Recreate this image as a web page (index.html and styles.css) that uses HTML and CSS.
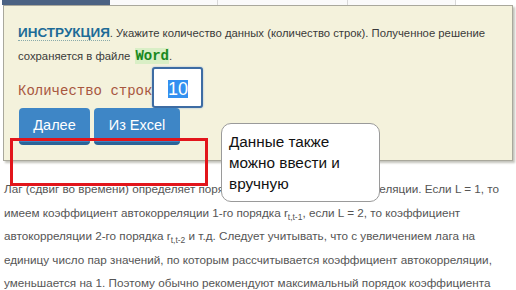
FILE: index.html
```html
<!DOCTYPE html>
<html lang="ru">
<head>
    <meta charset="UTF-8">
    <title>Автокорреляция</title>
    <link rel="stylesheet" href="styles.css">
</head>
<body>

    <div class="tabs">
        <a class="tab active" href="#"></a>
        <a class="tab" href="#"></a>
        <a class="tab tab-wide" href="#"></a>
        <a class="tab" href="#"></a>
    </div>

    <!-- блок ввода данных -->
    <div class="task">
        <p class="help"><span class="hint">ИНСТРУКЦИЯ</span>. Укажите количество данных (количество строк). Полученное решение сохраняется в файле <span class="word">Word</span>.</p>
        <div class="rows">
            <label class="rows-label">Количество строк</label>
            <div class="num-box"><span class="num">10</span></div>
        </div>
        <div class="buttons">
            <button class="btn btn-next">Далее</button>
            <button class="btn btn-excel">Из Excel</button>
        </div>
    </div>

    <div class="article">
        <p>Лаг (сдвиг во времени) определяет порядок коэффициента автокорреляции. Если L = 1, то имеем коэффициент автокорреляции 1-го порядка r<sub>t,t-1</sub>, если L = 2, то коэффициент автокорреляции 2-го порядка r<sub>t,t-2</sub> и т.д. Следует учитывать, что с увеличением лага на единицу число пар значений, по которым рассчитывается коэффициент автокорреляции, уменьшается на 1. Поэтому обычно рекомендуют максимальный порядок коэффициента</p>
    </div>

    <!-- пометки поверх страницы -->
    <div class="mark"></div>
    <div class="callout">Данные также можно ввести и вручную</div>

</body>
</html>
```

FILE: styles.css
```css
body {
    margin: 0;
    padding: 0;
    font-family: 'Liberation Sans', Arial, sans-serif;
    background-color: #fff;
    position: relative;
    width: 516px;
    height: 290px;
    overflow: hidden;
}

.tabs {
    display: flex;
    height: 5px;
    padding-left: 2px;
}

.tab {
    display: block;
    width: 107px;
    border-right: 1px solid #d8d8d8;
    background-color: #fafafa;
}

.tab-wide {
    width: 129px;
}

.tab.active {
    width: 108px;
    background-color: #4b6283;
    border-right: none;
}

.task {
    margin: 0 3px 0 3px;
    padding: 15px 14px 15px 14px;
    background-color: #f4f2dc;
    border: 1px solid #a9a89c;
    box-shadow: 2px 2px 2px #c4c4bc;
}

.help {
    margin: 0;
    font-size: 11.3px;
    line-height: 23px;
    color: #3a3a3a;
}

.hint {
    font-weight: bold;
    font-size: 13.5px;
    color: #1d6b97;
    border-bottom: 1px dotted #8aa;
}

.word {
    font-family: 'Liberation Mono', 'Courier New', monospace;
    font-weight: bold;
    font-size: 14px;
    color: #18881c;
    background-color: #d9efc6;
    margin-left: 2px;
}

.rows {
    display: flex;
    align-items: center;
    margin-top: -1px;
}

.rows-label {
    font-family: 'Liberation Mono', 'Courier New', monospace;
    font-size: 14px;
    line-height: 16px;
    padding-top: 6px;
    color: #a8573f;
    white-space: nowrap;
    flex-shrink: 0;
}

.num-box {
    flex-shrink: 0;
    width: 47px;
    height: 37px;
    border: 2px solid #3d6ca3;
    border-radius: 3px;
    background-color: #fff;
    box-shadow: 0 0 2px #8fb0d8;
    display: flex;
    align-items: center;
    justify-content: center;
}

.num {
    font-size: 18px;
    line-height: 18px;
    color: #fff;
    background-color: #3390f0;
    margin-top: 3px;
}

.buttons {
    display: flex;
    gap: 4px;
    margin-left: 1px;
}

.btn {
    height: 37px;
    border: none;
    border-bottom: 3px solid #2b6497;
    border-radius: 4px;
    background-color: #3e86c6;
    color: #fff;
    font-family: 'Liberation Sans', Arial, sans-serif;
    font-size: 14.5px;
    padding: 0;
}

.btn-next {
    width: 71px;
}

.btn-excel {
    width: 86px;
}

.article {
    padding: 0 9px 0 4px;
    margin-top: 16px;
}

.article p {
    margin: 0;
    font-size: 11.7px;
    line-height: 23.5px;
    color: #555;
}

.article sub {
    font-size: 8.5px;
    line-height: 0;
}

.mark {
    position: absolute;
    left: 10px;
    top: 138px;
    width: 192px;
    height: 42px;
    border: 3px solid #e2151b;
}

.callout {
    position: absolute;
    left: 221px;
    top: 123px;
    width: 143px;
    height: 70px;
    padding: 7px 7px 0 7px;
    background-color: #fff;
    border: 1.5px solid #9a9a9a;
    border-radius: 10px;
    font-size: 15.3px;
    line-height: 21px;
    color: #111;
}
```
